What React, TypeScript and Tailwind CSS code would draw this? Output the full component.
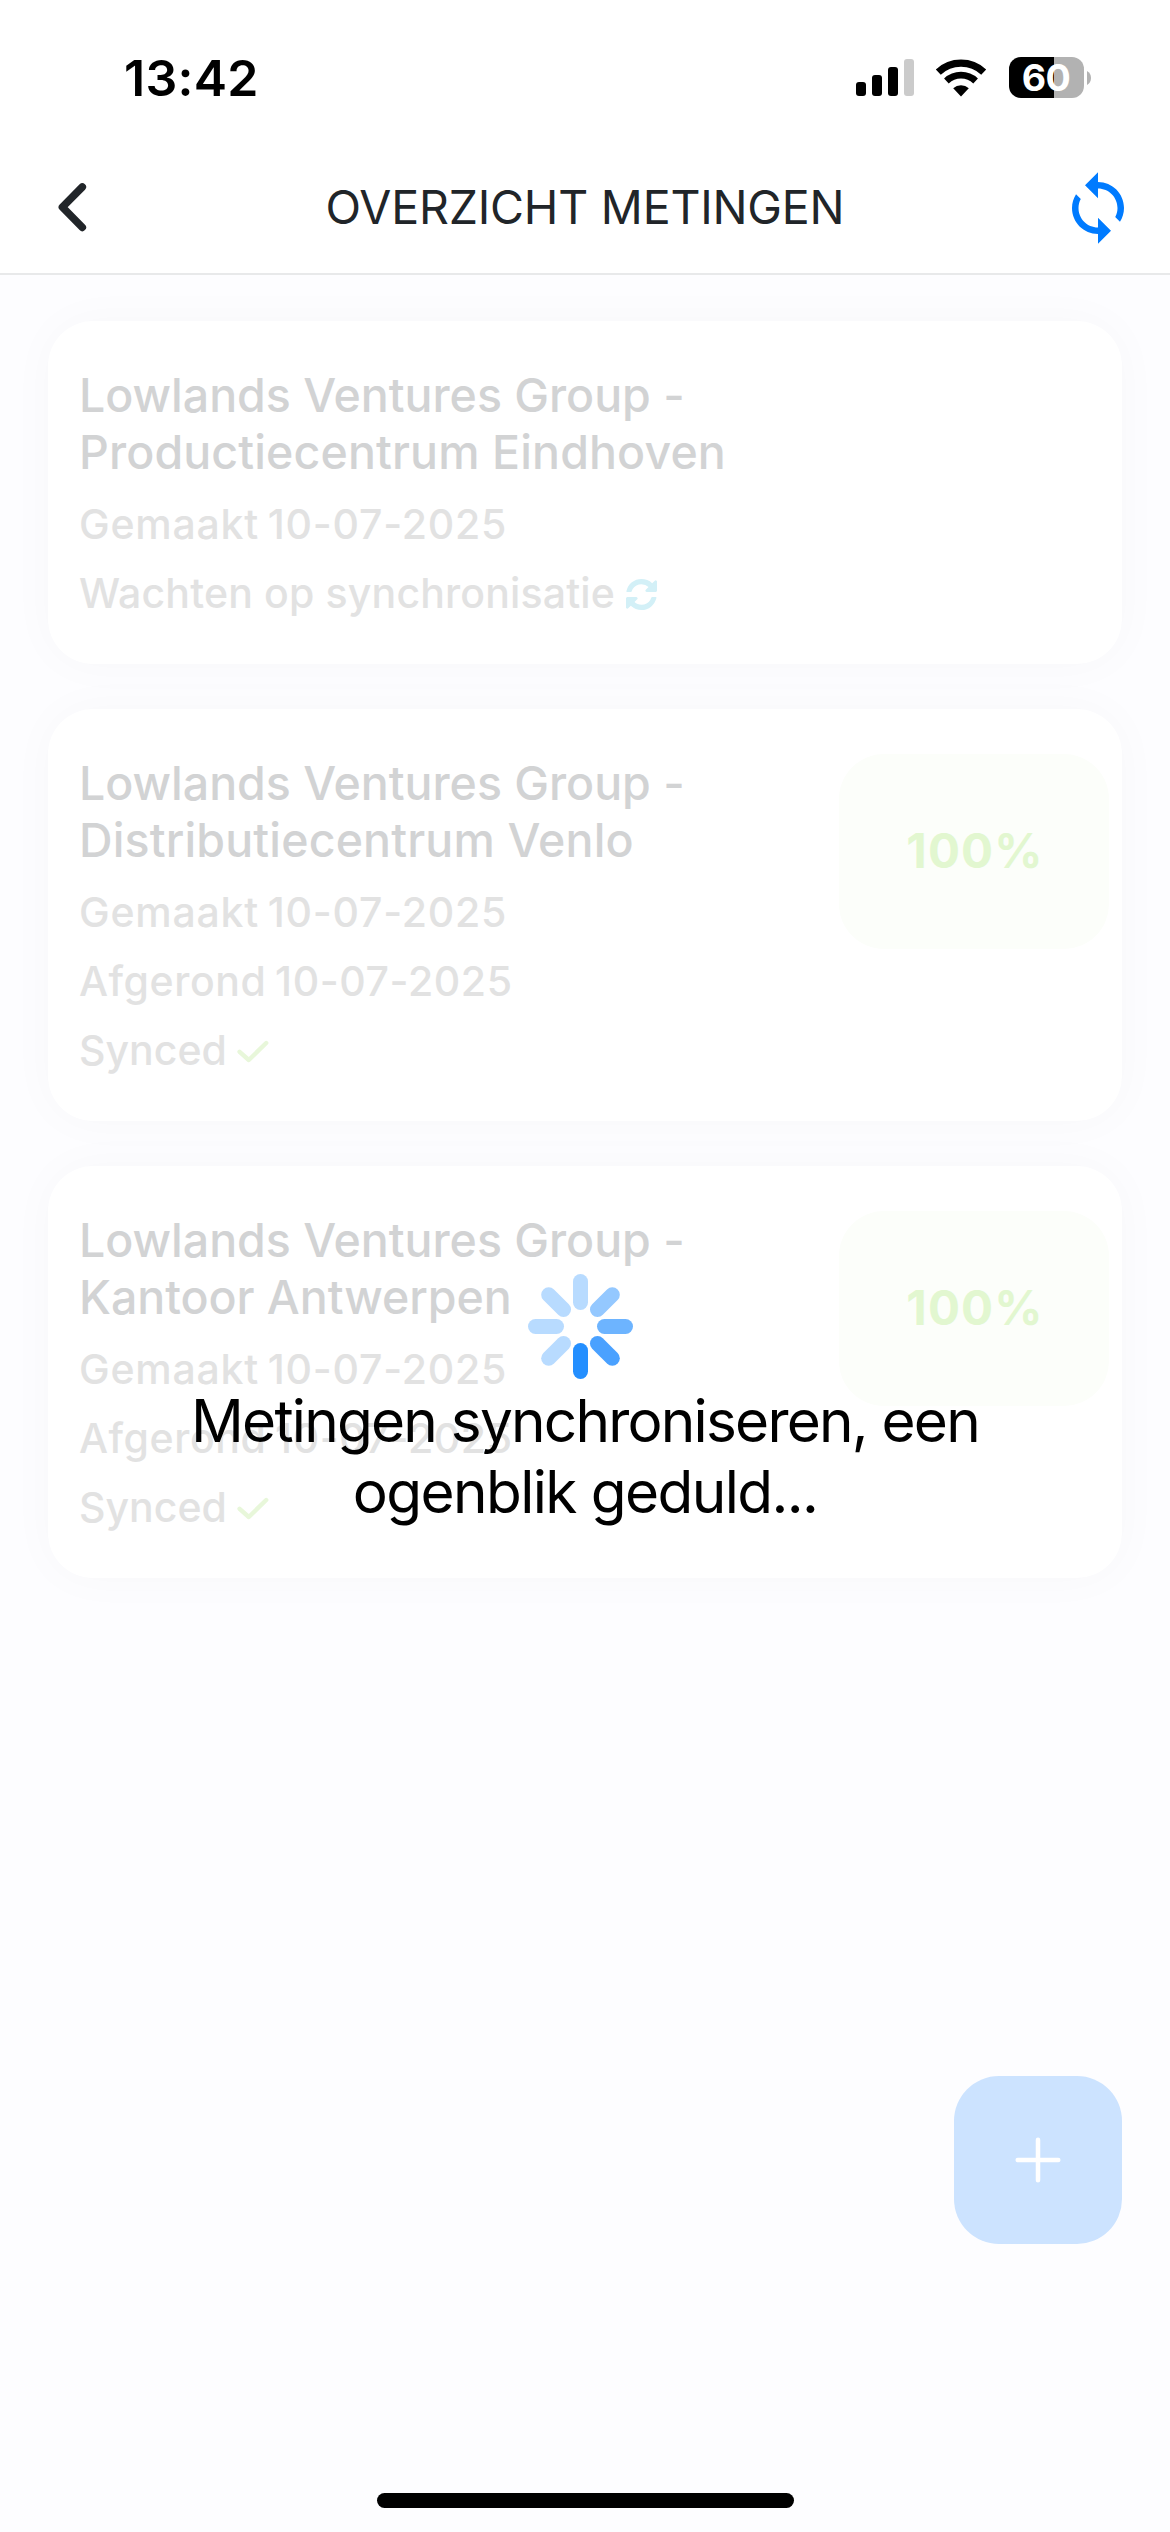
import type { ReactNode } from 'react';

interface Line {
  text: string;
  tracking: string;
  icon?: ReactNode;
}

interface Measurement {
  location: string;
  tracking: string;
  lines: Line[];
  score?: string;
}

function PendingIcon() {
  return (
    <svg viewBox="0 0 1536 1536" className="w-[31px] h-[31px] ml-[11px] mt-[2px] text-[#d3f0f7]" fill="currentColor">
      <path d="M1511 928q0 5-1 7-64 268-268 434.5t-478 166.5q-146 0-282.5-55t-243.5-157l-129 129q-19 19-45 19t-45-19-19-45v-448q0-26 19-45t45-19h448q26 0 45 19t19 45-19 45l-137 137q71 66 161 102t187 36q134 0 250-65t186-179q11-17 53-117 8-23 30-23h192q13 0 22.5 9.5t9.5 22.5zm25-800v448q0 26-19 45t-45 19h-448q-26 0-45-19t-19-45 19-45l138-138q-148-137-349-137-134 0-250 65t-186 179q-11 17-53 117-8 23-30 23h-199q-13 0-22.5-9.5t-9.5-22.5v-7q65-268 270-434.5t480-166.5q146 0 284 55.5t245 156.5l130-129q19-19 45-19t45 19 19 45z" />
    </svg>
  );
}

function CheckIcon() {
  return (
    <svg viewBox="0 0 32 24" className="w-8 h-6 ml-[10px] mt-[3px] text-[#e8f7da]" fill="none" stroke="currentColor">
      <path d="M2.6 11.8 11.8 20 29.2 3" strokeWidth="4.4" strokeLinecap="round" strokeLinejoin="round" />
    </svg>
  );
}

const created: Line = { text: 'Gemaakt 10-07-2025', tracking: 'tracking-[0.78px] [word-spacing:-3px]' };
const finished: Line = { text: 'Afgerond 10-07-2025', tracking: 'tracking-[0.6px] [word-spacing:-3px]' };
const synced: Line = { text: 'Synced', tracking: 'tracking-normal', icon: <CheckIcon /> };
const pending: Line = { text: 'Wachten op synchronisatie', tracking: 'tracking-[0.16px]', icon: <PendingIcon /> };

const measurements: Measurement[] = [
  {
    location: 'Productiecentrum Eindhoven',
    tracking: 'tracking-[0.12px]',
    lines: [created, pending],
  },
  {
    location: 'Distributiecentrum Venlo',
    tracking: 'tracking-[0.15px]',
    lines: [created, finished, synced],
    score: '100%',
  },
  {
    location: 'Kantoor Antwerpen',
    tracking: 'tracking-[-0.05px]',
    lines: [created, finished, synced],
    score: '100%',
  },
];

const spokes = [
  { angle: 0, color: '#b8dbff' },
  { angle: 45, color: '#94c8ff' },
  { angle: 90, color: '#6db4ff' },
  { angle: 135, color: '#4aa1ff' },
  { angle: 180, color: '#248fff' },
  { angle: 225, color: '#b8dbff' },
  { angle: 270, color: '#b8dbff' },
  { angle: 315, color: '#b8dbff' },
];

function StatusBar() {
  return (
    <div className="h-[144px] pt-[47px] pl-[124px] pr-[79px] bg-white">
      <div className="h-[61px] flex items-center justify-between">
        <span className="text-[50px] leading-[60px] font-semibold tracking-[0.28px] text-black">13:42</span>
        <div className="flex items-center">
          {/* Signal */}
          <div className="flex items-end gap-[6px] h-[37px]">
            <div className="w-[10px] h-[14px] rounded-[3px] bg-black" />
            <div className="w-[10px] h-[21px] rounded-[3px] bg-black" />
            <div className="w-[10px] h-[29px] rounded-[3px] bg-black" />
            <div className="w-[10px] h-[37px] rounded-[3px] bg-[#cbcbcb]" />
          </div>
          {/* Wifi */}
          <svg viewBox="0 0 52 38" className="w-[52px] h-[38px] ml-[21px]" fill="none" stroke="#000">
            <path d="M3.3 13.1A33.3 33.3 0 0 1 48.7 13.1" strokeWidth="7.3" />
            <path d="M11.4 21.9A21.4 21.4 0 0 1 40.6 21.9" strokeWidth="6.8" />
            <path d="M26 37.5 18.2 29.2A11.6 11.6 0 0 1 33.8 29.2Z" fill="#000" stroke="none" />
          </svg>
          {/* Battery */}
          <div className="ml-[22px] w-[75px] h-[41px] rounded-[12px] flex items-center justify-center bg-[linear-gradient(to_right,#000_60%,#b2b2b2_60%)]">
            <span className="pr-px text-[37.5px] leading-[45px] font-bold tracking-[-0.5px] text-white">60</span>
          </div>
          <svg viewBox="0 0 4 14" className="w-1 h-[14px] ml-[3px]" fill="#b2b2b2">
            <path d="M0 0C2.5 1.2 4 4 4 7S2.5 12.8 0 14Z" />
          </svg>
        </div>
      </div>
    </div>
  );
}

function Header() {
  return (
    <header className="h-[131px] px-[33px] grid grid-cols-[1fr_auto_1fr] items-center bg-white border-b-2 border-[#e8e9ea]">
      <svg viewBox="0 0 30 50" className="w-[30px] h-[50px] ml-[24px] -mt-[3px]" fill="none" stroke="#212529">
        <path d="M25.3 5 5.4 25.2 25.3 45.4" strokeWidth="7.6" strokeLinecap="round" strokeLinejoin="round" />
      </svg>
      <h1 className="pb-[3px] text-[46.5px] leading-[56px] tracking-[-0.2px] text-[#212529]">OVERZICHT METINGEN</h1>
      <svg viewBox="0 0 24 24" className="w-[78px] h-[78px] -mt-px justify-self-end" fill="#007bff">
        <path d="M12 4V1L8 5l4 4V6c3.31 0 6 2.69 6 6 0 1.01-.25 1.97-.7 2.8l1.46 1.46C19.54 15.03 20 13.57 20 12c0-4.42-3.58-8-8-8zm0 14c-3.31 0-6-2.69-6-6 0-1.01.25-1.97.7-2.8L5.24 7.74C4.46 8.97 4 10.43 4 12c0 4.42 3.58 8 8 8v3l4-4-4-4v3z" />
      </svg>
    </header>
  );
}

function MeasurementCard({ location, tracking, lines, score }: Measurement) {
  return (
    <article className="flex items-start justify-between rounded-[45px] bg-white pl-[31px] pr-[13px] pt-[46px] pb-[36px] shadow-[0_0_48px_rgba(0,0,0,0.028)]">
      <div>
        <h2 className="text-[46.5px] leading-[57px] font-medium tracking-[-0.03px] text-[#d2d3d4]">
          Lowlands Ventures Group -
          <br />
          <span className={tracking}>{location}</span>
        </h2>
        <div className="mt-[9px]">
          {lines.map((line) => (
            <div key={line.text} className="h-[69px] flex items-center text-[41px] font-medium text-[#e2e2e2]">
              <span className={line.tracking}>{line.text}</span>
              {line.icon}
            </div>
          ))}
        </div>
      </div>
      {score && (
        <div className="-mt-px pb-[2px] pl-[2px] w-[270px] h-[195px] rounded-[45px] bg-[#fcfefa] flex items-center justify-center">
          <span className="text-[47.5px] leading-[56px] font-bold tracking-[1.2px] text-[#e2f7d0]">{score}</span>
        </div>
      )}
    </article>
  );
}

function SyncOverlay() {
  return (
    <div className="absolute inset-0 pt-[1274px] flex flex-col items-center">
      <svg viewBox="-52.5 -52.5 105 105" className="w-[105px] h-[105px] mr-[9px]">
        {spokes.map(({ angle, color }) => (
          <rect key={angle} x="-7.5" y="-52.5" width="15" height="36" rx="7.5" fill={color} transform={`rotate(${angle})`} />
        ))}
      </svg>
      <p className="mt-[6px] text-center text-[58.5px] leading-[71px] tracking-[-1.78px] text-black">
        Metingen synchroniseren, een
        <br />
        <span className="tracking-[-1.6px]">ogenblik geduld...</span>
      </p>
    </div>
  );
}

export default function App() {
  return (
    <div className="relative w-[1170px] h-[2532px] overflow-hidden flex flex-col bg-[#fdfdff] font-['Inter','Liberation_Sans',sans-serif]">
      <StatusBar />
      <Header />
      <main className="flex-1 px-12 pt-[46px] flex flex-col gap-[45px]">
        {measurements.map((measurement) => (
          <MeasurementCard key={measurement.location} {...measurement} />
        ))}
      </main>

      <button className="absolute left-[954px] top-[2076px] w-[168px] h-[168px] rounded-[45px] bg-[#cce3ff] flex items-center justify-center">
        <svg viewBox="0 0 46 46" className="w-[46px] h-[46px]" stroke="#fff" strokeWidth="4.5" strokeLinecap="round">
          <path d="M23 2.7V43.3M2.7 23H43.3" />
        </svg>
      </button>

      <SyncOverlay />

      {/* Home indicator */}
      <div className="absolute left-[377px] top-[2493px] w-[417px] h-[15px] rounded-full bg-black" />
    </div>
  );
}
